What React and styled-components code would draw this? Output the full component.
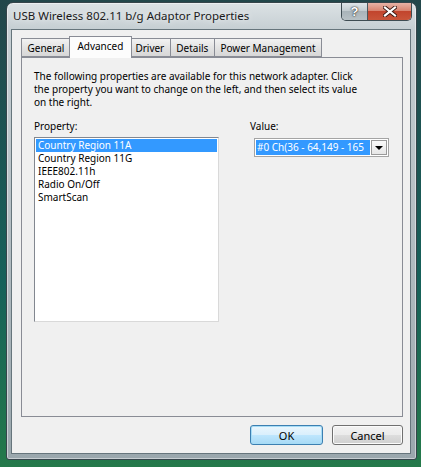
import React from "react";
import styled, { createGlobalStyle } from "styled-components";

const GlobalStyle = createGlobalStyle`
  html, body {
    margin: 0;
    padding: 0;
  }
  body {
    width: 421px;
    height: 467px;
    overflow: hidden;
    background: linear-gradient(180deg, #23474b 0%, #16615a 60%, #24794a 100%);
    font-family: "Noto Sans", "Liberation Sans", sans-serif;
  }
`;

const Desktop = styled.div`
  width: 421px;
  height: 467px;
  box-sizing: border-box;
  padding: 2px 4px 7px 6px;
  display: flex;
`;

const Window = styled.div`
  flex: 1;
  display: flex;
  flex-direction: column;
  border: 1px solid #36454b;
  border-radius: 7px 7px 3px 3px;
  background: linear-gradient(180deg, #dce2e5 0%, #c6cfd3 26px, #aeb9be 60%, #9aa7ad 100%);
  box-shadow: inset 0 0 0 1px rgba(255, 255, 255, 0.45);
`;

const TitleBar = styled.div`
  height: 26px;
  display: flex;
  align-items: flex-start;
  padding-left: 6px;
`;

const Title = styled.span`
  margin-top: 5px;
  font-size: 11.5px;
  color: #1a1a1a;
  text-shadow: 0 0 6px rgba(255, 255, 255, 0.9);
`;

const CaptionButtons = styled.div`
  margin-left: auto;
  margin-right: 4px;
  display: flex;
  border: 1px solid #3e4c52;
  border-top: none;
  border-radius: 0 0 5px 5px;
  overflow: hidden;
`;

const CaptionButton = styled.div`
  width: ${({ wide }) => (wide ? "43px" : "25px")};
  height: 17px;
  display: flex;
  align-items: center;
  justify-content: center;
  font-family: "Liberation Sans", sans-serif;
  font-weight: bold;
  font-size: 13px;
  color: #fff;
  text-shadow: 0 0 2px #333, 0 0 1px #000;
  background: ${({ danger }) =>
    danger
      ? "linear-gradient(180deg, #e7b3a6 0%, #d88470 45%, #c2452d 50%, #c9553a 100%)"
      : "linear-gradient(180deg, #dfe5e8 0%, #c2cbcf 45%, #a9b4b9 50%, #b7c1c5 100%)"};
  & + & {
    border-left: 1px solid #4a585e;
  }
`;

const Client = styled.div`
  flex: 1;
  margin: 0 5px 5px 4px;
  border: 1px solid #66757c;
  background: #f0f0f0;
  display: flex;
  flex-direction: column;
  padding: 7px 7px 8px 9px;
  font-size: 10px;
  color: #000;
`;

const TabStrip = styled.div`
  display: flex;
  align-items: flex-end;
  height: 21px;
  margin-bottom: -1px;
  position: relative;
  z-index: 1;
`;

const Tab = styled.div`
  height: ${({ active }) => (active ? "22px" : "19px")};
  box-sizing: border-box;
  padding: ${({ active }) => (active ? "2px 7.5px 0" : "2px 5.5px 0")};
  margin: ${({ active }) => (active ? "0 -2px 0 -2px" : "0 0 1px -1px")};
  border: 1px solid #898c95;
  border-bottom: ${({ active }) => (active ? "none" : "1px solid #898c95")};
  background: ${({ active }) =>
    active ? "#fcfcfc" : "linear-gradient(180deg, #f2f2f2 0%, #e3e3e3 50%, #d7d7d7 100%)"};
  position: relative;
  z-index: ${({ active }) => (active ? 2 : 1)};
  line-height: 15px;
  white-space: nowrap;
  &:first-child {
    margin-left: 0;
  }
`;

const Panel = styled.div`
  flex: 1;
  border: 1px solid #898c95;
  background: #f0f0f0;
  padding: 12px 12px;
  display: flex;
  flex-direction: column;
`;

const Description = styled.p`
  margin: 0;
  line-height: 13px;
`;

const Columns = styled.div`
  display: grid;
  grid-template-columns: 216px 1fr;
  margin-top: 11px;
`;

const Field = styled.div`
  display: flex;
  flex-direction: column;
`;

const Label = styled.div`
  line-height: 13px;
  margin-bottom: 4px;
`;

const ListBox = styled.div`
  width: 185px;
  height: 185px;
  box-sizing: border-box;
  border: 1px solid;
  border-color: #828790 #d9d9d9 #d9d9d9 #828790;
  background: #fff;
  padding: 1px;
`;

const ListItem = styled.div`
  line-height: 13px;
  padding-left: 2px;
  background: ${({ selected }) => (selected ? "#3399ff" : "transparent")};
  color: ${({ selected }) => (selected ? "#fff" : "#000")};
  white-space: nowrap;
`;

const Combo = styled.div`
  margin-left: 4px;
  margin-top: 1px;
  width: 135px;
  height: 19px;
  box-sizing: border-box;
  border: 1px solid #a4a4a4;
  background: #fff;
  display: flex;
  padding: 1px;
`;

const ComboText = styled.div`
  flex: 1;
  white-space: nowrap;
  background: #3399ff;
  color: #fff;
  line-height: 15px;
  padding-left: 1px;
`;

const ComboArrow = styled.div`
  width: 16px;
  margin-left: 1px;
  box-sizing: border-box;
  border: 1px solid #9a9a9a;
  background: linear-gradient(180deg, #fafafa 0%, #e6e6e6 100%);
  display: flex;
  align-items: center;
  justify-content: center;
  &::after {
    content: "";
    border-left: 4px solid transparent;
    border-right: 4px solid transparent;
    border-top: 4px solid #000;
  }
`;

const ButtonRow = styled.div`
  display: flex;
  justify-content: flex-end;
  gap: 9px;
  margin-top: 8px;
`;

const Button = styled.div`
  width: ${({ w }) => w}px;
  height: 20px;
  box-sizing: border-box;
  border: 1px solid ${({ primary }) => (primary ? "#3c7fb1" : "#707070")};
  border-radius: 3px;
  box-shadow: inset 0 0 0 1px ${({ primary }) => (primary ? "#a6dcf6" : "#fbfbfb")};
  background: ${({ primary }) =>
    primary
      ? "linear-gradient(180deg, #eaf6fd 0%, #d9effc 50%, #bee6fd 51%, #a7d9f5 100%)"
      : "linear-gradient(180deg, #f2f2f2 0%, #ebebeb 50%, #dddddd 51%, #cfcfcf 100%)"};
  display: flex;
  align-items: center;
  justify-content: center;
  font-size: 11px;
`;

const tabs = ["General", "Advanced", "Driver", "Details", "Power Management"];
const properties = [
  "Country Region 11A",
  "Country Region 11G",
  "IEEE802.11h",
  "Radio On/Off",
  "SmartScan",
];

export default function App() {
  return (
    <>
      <GlobalStyle />
      <Desktop>
        <Window>
          <TitleBar>
            <Title>USB Wireless 802.11 b/g Adaptor Properties</Title>
            <CaptionButtons>
              <CaptionButton>?</CaptionButton>
              <CaptionButton wide danger>
                <svg width="14" height="11" viewBox="0 0 14 11">
                  <path d="M2 1.5 L12 9.5 M12 1.5 L2 9.5" stroke="#3a1a14" strokeWidth="4" strokeLinecap="square" />
                  <path d="M2 1.5 L12 9.5 M12 1.5 L2 9.5" stroke="#fff" strokeWidth="2.2" strokeLinecap="square" />
                </svg>
              </CaptionButton>
            </CaptionButtons>
          </TitleBar>
          <Client>
            <TabStrip>
              {tabs.map((t) => (
                <Tab key={t} active={t === "Advanced"}>
                  {t}
                </Tab>
              ))}
            </TabStrip>
            <Panel>
              <Description>
                The following properties are available for this network adapter. Click
                <br />
                the property you want to change on the left, and then select its value
                <br />
                on the right.
              </Description>
              <Columns>
                <Field>
                  <Label>Property:</Label>
                  <ListBox>
                    {properties.map((p, i) => (
                      <ListItem key={p} selected={i === 0}>
                        {p}
                      </ListItem>
                    ))}
                  </ListBox>
                </Field>
                <Field>
                  <Label>Value:</Label>
                  <Combo>
                    <ComboText>#0 Ch(36 - 64,149 - 165</ComboText>
                    <ComboArrow />
                  </Combo>
                </Field>
              </Columns>
            </Panel>
            <ButtonRow>
              <Button w={73} primary>
                OK
              </Button>
              <Button w={71}>Cancel</Button>
            </ButtonRow>
          </Client>
        </Window>
      </Desktop>
    </>
  );
}
